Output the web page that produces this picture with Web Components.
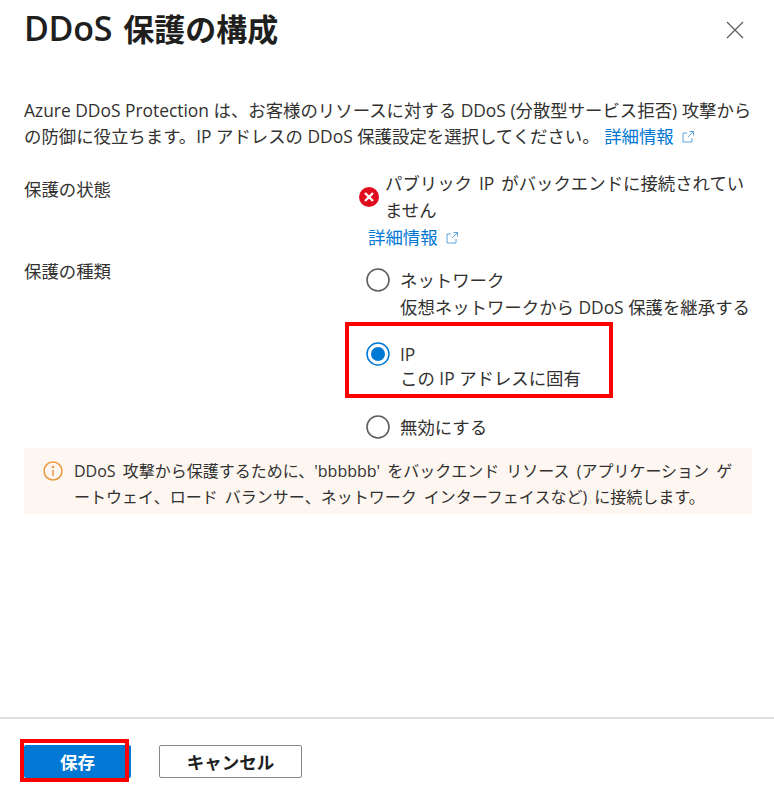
<!DOCTYPE html>
<html lang="ja">
<head>
<meta charset="utf-8">
<style>
html,body{margin:0;height:100%;background:#fff}
body{font-family:"Open Sans","Noto Sans CJK JP",sans-serif;color:#323130}
</style>
</head>
<body>
<ddos-panel>
	<panel-header slot="header"><span>DDoS</span> 保護の構成</panel-header>
	<intro-text>Azure DDoS Protection は、お客様のリソースに対する DDoS (分散型サービス拒否) 攻撃からの防御に役立ちます。IP アドレスの DDoS 保護設定を選択してください。 <ext-link>詳細情報</ext-link></intro-text>
	<form-row label="保護の状態" class="status">
		<status-error>パブリック IP がバックエンドに接続されていません</status-error>
		<ext-link class="more">詳細情報</ext-link>
	</form-row>
	<form-row label="保護の種類" class="kind">
		<radio-option title-text="ネットワーク" sub="仮想ネットワークから DDoS 保護を継承する"></radio-option>
		<radio-option title-text="IP" sub="この IP アドレスに固有" checked highlight></radio-option>
		<radio-option title-text="無効にする"></radio-option>
	</form-row>
	<info-bar>DDoS 攻撃から保護するために、'bbbbbb' をバックエンド リソース (アプリケーション ゲートウェイ、ロード バランサー、ネットワーク インターフェイスなど) に接続します。</info-bar>
	<panel-footer slot="footer"></panel-footer>
</ddos-panel>

<script>
//component ddos-panel
customElements.define('ddos-panel', class extends HTMLElement {
	constructor() {
		super()
		this.attachShadow({ mode: 'open' }).innerHTML = `
		<style>
			:host{display:flex;flex-direction:column;height:795px;box-sizing:border-box}
			.body{flex:1;padding:0 22px 0 24px}
		</style>
		<slot name="header"></slot>
		<div class="body"><slot></slot></div>
		<slot name="footer"></slot>`
	}
})

//component panel-header
customElements.define('panel-header', class extends HTMLElement {
	constructor() {
		super()
		this.attachShadow({ mode: 'open' }).innerHTML = `
		<style>
			:host{display:flex;justify-content:space-between;align-items:center;height:60px;padding:0 30px 0 24px;box-sizing:border-box}
			h1{margin:0 0 3px;font-size:31px;font-weight:600;color:#201f1e;line-height:57px;word-spacing:3px}
			::slotted(span){font-size:34px;letter-spacing:-.3px}
			svg{display:block}
		</style>
		<h1><slot></slot></h1>
		<svg width="18" height="18" viewBox="0 0 18 18"><path d="M1 1L17 17M17 1L1 17" stroke="#5f5e5d" stroke-width="1.2" fill="none"/></svg>`
	}
})

//component intro-text
customElements.define('intro-text', class extends HTMLElement {
	constructor() {
		super()
		this.attachShadow({ mode: 'open' }).innerHTML = `
		<style>
			:host{display:block;font-size:17.4px;line-height:26px;margin:37px -3px 0 0;word-spacing:0}
		</style>
		<slot></slot>`
	}
})

//component ext-link
customElements.define('ext-link', class extends HTMLElement {
	constructor() {
		super()
		this.attachShadow({ mode: 'open' }).innerHTML = `
		<style>
			:host{display:inline;color:#0078d4;font-size:17.4px}
			svg{vertical-align:-1px;margin-left:7px}
		</style>
		<slot></slot><svg width="14" height="14" viewBox="0 0 14 14" fill="none" stroke="#5ea5dc" stroke-width="1"><path d="M6 3H2v9h9V8"/><path d="M7 7l5.5-5.5M8.5 1.5h4v4"/></svg>`
	}
})

//component form-row
customElements.define('form-row', class extends HTMLElement {
	constructor() {
		super()
		this.attachShadow({ mode: 'open' }).innerHTML = `
		<style>
			:host{display:grid;grid-template-columns:344px 1fr;font-size:17.4px}
			:host(.status){margin-top:27px}
			:host(.kind){padding-top:8px}
			.label{line-height:26px}
			:host(.kind) .fields{padding-top:9px}
		</style>
		<div class="label"></div>
		<div class="fields"><slot></slot></div>`
		this.shadowRoot.querySelector('.label').textContent = this.getAttribute('label')
	}
	connectedCallback() {
		let more = this.querySelector('.more')
		if (more) more.style.cssText = 'display:block;line-height:26px'
	}
})

//component status-error
customElements.define('status-error', class extends HTMLElement {
	constructor() {
		super()
		this.attachShadow({ mode: 'open' }).innerHTML = `
		<style>
			:host{display:flex;align-items:center;gap:6px;line-height:27px;margin-left:-9px;margin-top:-6px;word-spacing:2.5px}
			svg{flex:none}
			div{width:366px}
		</style>
		<svg width="20" height="20" viewBox="0 0 20 20"><circle cx="10" cy="10" r="10" fill="#e00b1c"/><path d="M6 6l8 8M14 6l-8 8" stroke="#fff" stroke-width="2.4" fill="none"/></svg>
		<div><slot></slot></div>`
	}
})

//component radio-option
customElements.define('radio-option', class extends HTMLElement {
	constructor() {
		super()
		this.attachShadow({ mode: 'open' }).innerHTML = `
		<style>
			:host{display:block;margin-left:-2px;box-sizing:border-box}
			:host([highlight]){border:4px solid #f00;width:268px;margin-left:-23px;margin-top:1px;margin-bottom:16px;padding:16px 0 4px 17px}
			.wrap{display:flex;gap:10px;white-space:nowrap;line-height:27px}
			:host([highlight]) .wrap{line-height:24px}
			.dot{flex:none;width:24px;height:24px;margin-top:1px}
			:host([highlight]) .dot{margin-top:0}
		</style>
		<div class="wrap">
			<svg class="dot" viewBox="0 0 24 24"></svg>
			<div><div class="t"></div><div class="sub"></div></div>
		</div>`
		let s = this.shadowRoot
		s.querySelector('.t').textContent = this.getAttribute('title-text')
		s.querySelector('.sub').textContent = this.getAttribute('sub') || ''
		s.querySelector('.dot').innerHTML = this.hasAttribute('checked')
			? '<circle cx="12" cy="12" r="11" fill="none" stroke="#0078d4" stroke-width="1.5"/><circle cx="12" cy="12" r="7" fill="#0078d4"/>'
			: '<circle cx="12" cy="12" r="11" fill="none" stroke="#605e5c" stroke-width="1.6"/>'
	}
})

//component info-bar
customElements.define('info-bar', class extends HTMLElement {
	constructor() {
		super()
		this.attachShadow({ mode: 'open' }).innerHTML = `
		<style>
			:host{display:flex;gap:11px;background:#fef7f1;padding:10px 17px 4px 19px;height:66px;box-sizing:border-box;font-size:16px;line-height:26px;margin-top:7px;word-spacing:3px}
			svg{flex:none;margin-top:3px}
		</style>
		<svg width="20" height="20" viewBox="0 0 20 20" fill="none" stroke="#e9983d" stroke-width="1.5"><circle cx="10" cy="10" r="9"/><path d="M10 9v6"/><circle cx="10" cy="6" r=".6"/></svg>
		<div><slot></slot></div>`
	}
})

//component panel-footer
customElements.define('panel-footer', class extends HTMLElement {
	constructor() {
		super()
		this.attachShadow({ mode: 'open' }).innerHTML = `
		<style>
			:host{display:flex;gap:28px;height:78px;box-sizing:border-box;border-top:2px solid #e1dfdd;padding:26px 24px 0;font-size:17.5px;font-weight:700}
			button{font:inherit;height:33px;box-sizing:border-box;border-radius:2px;padding:0;cursor:pointer}
			.save{position:relative;width:107px;background:#0078d4;border:0;color:#fff}
			.save::after{content:"";position:absolute;left:-4px;top:-6px;width:109px;height:43px;box-sizing:border-box;border:4px solid #f00}
			.cancel{width:143px;background:#fff;border:1.5px solid #8a8886;color:#201f1e}
		</style>
		<button class="save">保存</button>
		<button class="cancel">キャンセル</button>`
	}
})
</script>
</body>
</html>
